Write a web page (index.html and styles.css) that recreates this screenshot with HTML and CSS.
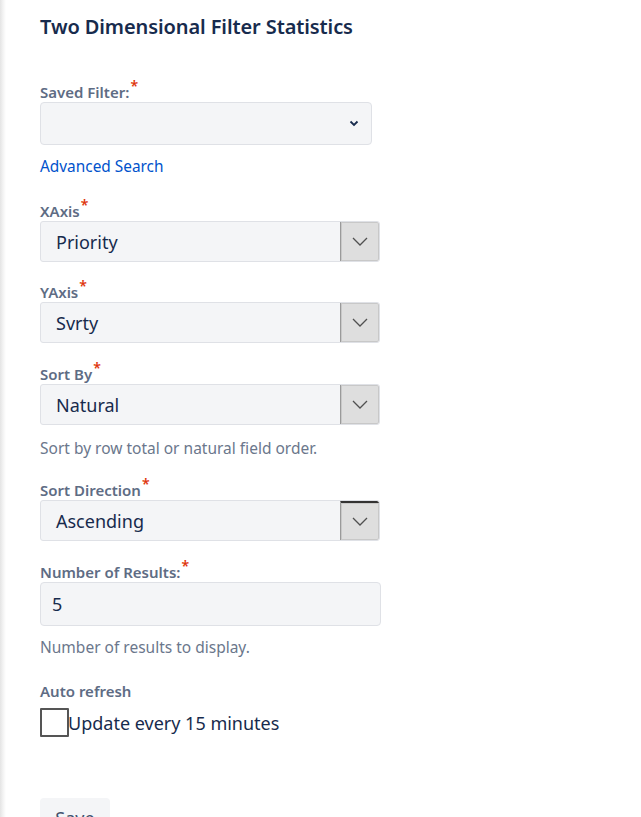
FILE: index.html
```html
<!DOCTYPE html>
<html>
<head>
<meta charset="utf-8">
<link rel="stylesheet" href="styles.css">
</head>
<body>
<div class="page">
  <h1 class="title">Two Dimensional Filter Statistics</h1>

  <div class="field f-saved">
    <div class="label">Saved Filter:<span class="req">*</span></div>
    <div class="plain-select">
      <svg class="small-chev" width="10" height="7" viewBox="0 0 10 7"><path d="M1.5 1.5 L5 5 L8.5 1.5" fill="none" stroke="#172b4d" stroke-width="1.8"/></svg>
    </div>
    <a class="link" href="#">Advanced Search</a>
  </div>

  <div class="field f-x">
    <div class="label">XAxis<span class="req">*</span></div>
    <div class="select"><span class="value">Priority</span><span class="btn"><svg width="16" height="9" viewBox="0 0 16 9"><path d="M1 1 L8 8 L15 1" fill="none" stroke="#505050" stroke-width="1.3"/></svg></span></div>
  </div>

  <div class="field f-y">
    <div class="label">YAxis<span class="req">*</span></div>
    <div class="select"><span class="value">Svrty</span><span class="btn"><svg width="16" height="9" viewBox="0 0 16 9"><path d="M1 1 L8 8 L15 1" fill="none" stroke="#505050" stroke-width="1.3"/></svg></span></div>
  </div>

  <div class="field">
    <div class="label">Sort By<span class="req">*</span></div>
    <div class="select"><span class="value">Natural</span><span class="btn"><svg width="16" height="9" viewBox="0 0 16 9"><path d="M1 1 L8 8 L15 1" fill="none" stroke="#505050" stroke-width="1.3"/></svg></span></div>
    <div class="desc">Sort by row total or natural field order.</div>
  </div>

  <div class="field after-desc">
    <div class="label">Sort Direction<span class="req">*</span></div>
    <div class="select"><span class="value">Ascending</span><span class="btn btn-dark"><svg width="16" height="9" viewBox="0 0 16 9"><path d="M1 1 L8 8 L15 1" fill="none" stroke="#505050" stroke-width="1.3"/></svg></span></div>
  </div>

  <div class="field">
    <div class="label">Number of Results:<span class="req">*</span></div>
    <div class="input">5</div>
    <div class="desc desc-tight">Number of results to display.</div>
  </div>

  <div class="field f-auto">
    <div class="label">Auto refresh</div>
    <label class="check"><span class="box"></span><span class="check-text">Update every 15 minutes</span></label>
  </div>

  <div class="actions">
    <button class="save">Save</button>
  </div>
</div>
</body>
</html>
```

FILE: styles.css
```css
html, body {
  margin: 0;
  padding: 0;
  background: #fff;
}
body {
  font-family: "Noto Sans", "Open Sans", sans-serif;
  color: #172b4d;
  background: linear-gradient(to right, #e4e4e4 0, #f3f3f3 3px, #ffffff 6px);
  min-height: 817px;
  overflow: hidden;
}
.page {
  padding: 15px 0 0 40px;
}
.title {
  margin: 0;
  font-size: 20px;
  line-height: 24px;
  font-weight: 600;
  color: #172b4d;
  letter-spacing: -0.1px;
}
.field {
  margin-top: 21px;
}
.f-saved {
  margin-top: 43px;
}
.label {
  font-size: 15px;
  line-height: 20px;
  font-weight: 600;
  color: #5e6c84;
}
.req {
  color: #de350b;
  font-size: 14px;
  line-height: 0;
  vertical-align: 7px;
  margin-left: 1px;
}
.plain-select {
  height: 41px;
  border: 1px solid #dfe1e6;
  border-radius: 4px;
  background: #f4f5f7;
  display: flex;
  align-items: center;
  justify-content: flex-end;
  padding-right: 12px;
  box-sizing: content-box;
  width: 318px;
}
.link {
  display: block;
  margin-top: 12px;
  font-size: 15.4px;
  line-height: 20px;
  color: #0052cc;
  text-decoration: none;
}
.f-x {
  margin-top: 24px;
}
.f-y {
  margin-top: 20px;
}
.select {
  width: 340px;
  height: 41px;
  box-sizing: border-box;
  border: 1px solid #dfe1e6;
  border-radius: 3px;
  background: #f4f5f7;
  display: flex;
  align-items: stretch;
  overflow: hidden;
}
.value {
  flex: 1;
  display: flex;
  align-items: center;
  padding-left: 15px;
  font-size: 18px;
  color: #172b4d;
}
.btn {
  width: 38px;
  background: #dedede;
  border-left: 1px solid #9a9a9a;
  display: flex;
  align-items: center;
  justify-content: center;
  border-radius: 0 2px 2px 0;
  box-shadow: inset 0 0 0 1px #c8c8c8;
}
.btn-dark {
  border-top: 2px solid #333;
}
.desc {
  margin-top: 12px;
  font-size: 15.5px;
  line-height: 22px;
  color: #6b778c;
}
.desc-tight {
  margin-top: 10px;
}
.after-desc {
  margin-top: 21px;
}
.input {
  width: 341px;
  height: 44px;
  box-sizing: border-box;
  border: 1px solid #dfe1e6;
  border-radius: 4px;
  background: #f4f5f7;
  padding-left: 11px;
  display: flex;
  align-items: center;
  font-size: 18px;
  color: #172b4d;
}
.f-auto {
  margin-top: 23px;
}
.check {
  display: flex;
  align-items: center;
  margin-top: 7px;
}
.box {
  width: 29px;
  height: 29px;
  box-sizing: border-box;
  border: 2px solid #555;
  border-radius: 1px;
  background: #fff;
}
.check-text {
  font-size: 18px;
  color: #172b4d;
  margin-left: -1px;
}
.actions {
  margin-top: 61px;
}
.save {
  font-family: inherit;
  width: 70px;
  height: 40px;
  border: none;
  border-radius: 4px;
  background: #f4f5f7;
  color: #42526e;
  font-size: 18px;
  padding: 0;
}
```
